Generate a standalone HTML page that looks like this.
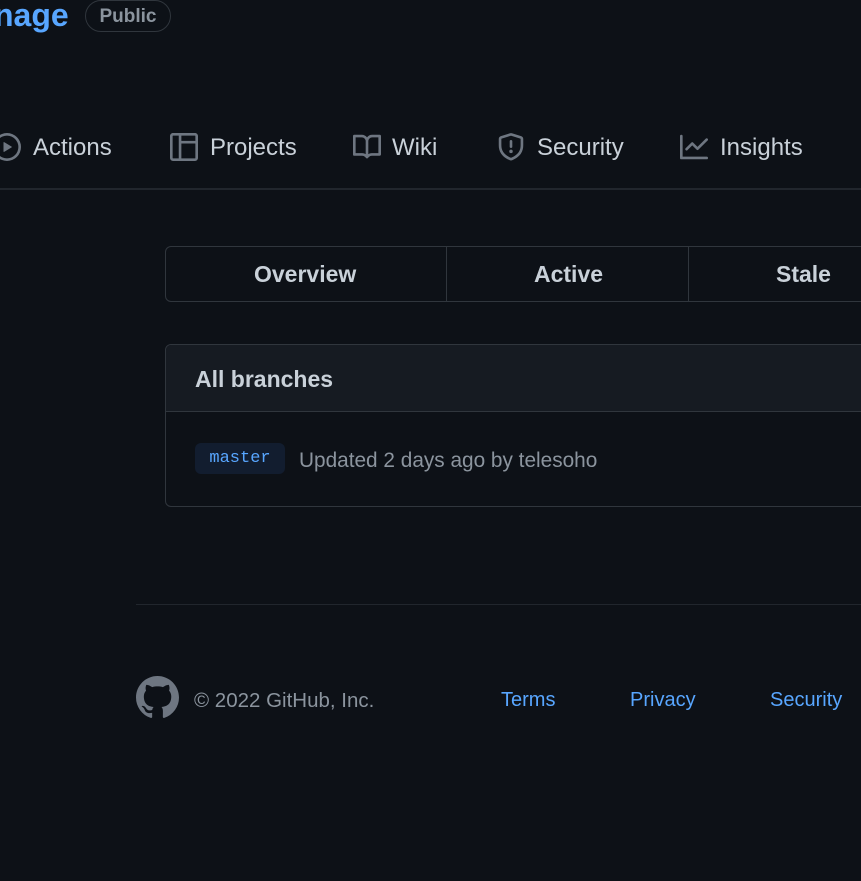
<!DOCTYPE html>
<html><head><meta charset="utf-8"><style>
*{margin:0;padding:0;box-sizing:border-box}
body{width:861px;height:881px;background:#0d1117;font-family:"Liberation Sans",sans-serif;color:#c9d1d9;position:relative;overflow:hidden}
.a{position:absolute;white-space:nowrap}
.nav{font-size:24px;color:#c9d1d9;top:134px}
.ic{position:absolute;top:133px}
</style></head><body>
<div class="a" style="left:-6px;top:-3px;font-size:32px;color:#58a6ff;font-weight:600">nage</div>
<div class="a" style="left:85px;top:0;width:86px;height:32px;border:1px solid #30363d;border-radius:16px;font-size:19px;color:#8b949e;font-weight:600;text-align:center;line-height:31px">Public</div>

<svg class="ic" style="left:-7px" width="28" height="28" viewBox="0 0 16 16" fill="#6e7681"><path d="M8 0a8 8 0 1 1 0 16A8 8 0 0 1 8 0ZM1.5 8a6.5 6.5 0 1 0 13 0 6.5 6.5 0 0 0-13 0Zm4.879-2.773 4.264 2.559a.25.25 0 0 1 0 .428l-4.264 2.559A.25.25 0 0 1 6 10.559V5.442a.25.25 0 0 1 .379-.215Z"/></svg>
<div class="a nav" style="left:33px">Actions</div>
<svg class="ic" style="left:170px" width="28" height="28" viewBox="0 0 16 16" fill="#6e7681"><path d="M1.75 0h12.5C15.216 0 16 .784 16 1.750v12.5A1.75 1.75 0 0 1 14.25 16H1.75A1.75 1.75 0 0 1 0 14.25V1.75C0 .784.784 0 1.75 0ZM1.5 1.75v12.5c0 .138.112.25.25.25H5V1.5H1.750a.25.25 0 0 0-.25.25ZM6.5 14.5h7.75a.25.25 0 0 0 .25-.25V6h-8Zm8-10V1.75a.25.25 0 0 0-.25-.25H6.5v3Z"/></svg>
<div class="a nav" style="left:210px">Projects</div>
<svg class="ic" style="left:353px" width="28" height="28" viewBox="0 0 16 16" fill="#6e7681"><path d="M0 1.75A.75.75 0 0 1 .75 1h4.253c1.227 0 2.317.59 3 1.501A3.743 3.743 0 0 1 11.006 1h4.245a.75.75 0 0 1 .75.75v10.5a.75.75 0 0 1-.75.75h-4.507a2.25 2.25 0 0 0-1.591.659l-.622.621a.75.75 0 0 1-1.060 0l-.622-.621A2.25 2.25 0 0 0 5.258 13H.75a.75.75 0 0 1-.75-.75Zm7.251 10.324.004-5.073-.002-2.253A2.25 2.25 0 0 0 5.003 2.5H1.5v9h3.757a3.75 3.75 0 0 1 1.994.574ZM8.755 4.75l-.004 7.322a3.752 3.752 0 0 1 1.992-.572H14.5v-9h-3.495a2.25 2.25 0 0 0-2.25 2.25Z"/></svg>
<div class="a nav" style="left:392px">Wiki</div>
<svg class="ic" style="left:497px" width="28" height="28" viewBox="0 0 16 16" fill="#6e7681"><path d="M7.467.133a1.748 1.748 0 0 1 1.066 0l5.25 1.68A1.75 1.75 0 0 1 15 3.48V7c0 1.566-.32 3.182-1.303 4.682-.983 1.498-2.585 2.813-5.032 3.855a1.697 1.697 0 0 1-1.330 0c-2.447-1.042-4.049-2.357-5.032-3.855C1.32 10.182 1 8.566 1 7V3.48a1.755 1.755 0 0 1 1.217-1.667Zm.61 1.429a.25.25 0 0 0-.153 0l-5.25 1.68a.25.25 0 0 0-.174.238V7c0 1.358.275 2.666 1.057 3.86.784 1.194 2.121 2.34 4.366 3.297a.196.196 0 0 0 .154 0c2.245-.956 3.582-2.104 4.366-3.298C13.225 9.666 13.5 8.36 13.5 7V3.48a.251.251 0 0 0-.174-.237l-5.25-1.68ZM8.75 4.75v3a.75.75 0 0 1-1.5 0v-3a.75.75 0 0 1 1.5 0ZM9 10.5a1 1 0 1 1-2 0 1 1 0 0 1 2 0Z"/></svg>
<div class="a nav" style="left:537px">Security</div>
<svg class="ic" style="left:680px" width="28" height="28" viewBox="0 0 16 16" fill="#6e7681"><path d="M1.5 1.75V13.5h13.75a.75.75 0 0 1 0 1.5H.75a.75.75 0 0 1-.75-.75V1.75a.75.75 0 0 1 1.5 0Zm14.28 2.53-5.25 5.25a.75.75 0 0 1-1.060 0L7 7.06 4.28 9.78a.751.751 0 0 1-1.042-.018.751.751 0 0 1-.018-1.042l3.25-3.25a.75.75 0 0 1 1.060 0L10 7.94l4.72-4.72a.751.751 0 0 1 1.042.018.751.751 0 0 1 .018 1.042Z"/></svg>
<div class="a nav" style="left:720px">Insights</div>
<div class="a" style="left:0;top:188px;width:861px;height:2px;background:#21262d"></div>

<div class="a" style="left:165px;top:246px;width:720px;height:56px;border:1px solid #30363d;border-radius:6px"></div>
<div class="a" style="left:446px;top:247px;width:1px;height:54px;background:#30363d"></div>
<div class="a" style="left:688px;top:247px;width:1px;height:54px;background:#30363d"></div>
<div class="a" style="left:254px;top:261px;font-size:23px;font-weight:600">Overview</div>
<div class="a" style="left:534px;top:261px;font-size:23px;font-weight:600">Active</div>
<div class="a" style="left:776px;top:261px;font-size:23px;font-weight:600">Stale</div>

<div class="a" style="left:165px;top:344px;width:720px;height:163px;border:1px solid #30363d;border-radius:6px;overflow:hidden">
 <div style="height:67px;background:#161b22;border-bottom:1px solid #30363d"></div>
</div>
<div class="a" style="left:195px;top:366px;font-size:23px;font-weight:600">All branches</div>
<div class="a" style="left:195px;top:443px;width:90px;height:31px;background:#121d2f;border-radius:6px;color:#58a6ff;font-family:'Liberation Mono',monospace;font-size:17px;line-height:32px;text-align:center;font-weight:500">master</div>
<div class="a" style="left:299px;top:449px;font-size:20.8px;color:#8b949e">Updated 2 days ago by telesoho</div>

<div class="a" style="left:136px;top:604px;width:725px;height:1px;background:#21262d"></div>
<svg class="a" style="left:136px;top:676px" width="43" height="43" viewBox="0 0 16 16" fill="#6e7681"><path d="M8 0c4.42 0 8 3.58 8 8a8.013 8.013 0 0 1-5.45 7.59c-.4.08-.55-.17-.55-.38 0-.27.01-1.13.01-2.2 0-.75-.25-1.23-.54-1.48 1.78-.2 3.65-.88 3.65-3.95 0-.88-.31-1.59-.82-2.15.08-.2.36-1.020-.08-2.12 0 0-.67-.22-2.2.82-.64-.18-1.32-.27-2-.27-.68 0-1.36.09-2 .27-1.53-1.03-2.2-.82-2.2-.82-.44 1.1-.16 1.92-.08 2.12-.51.56-.82 1.28-.82 2.15 0 3.06 1.86 3.75 3.64 3.95-.23.2-.44.55-.51 1.07-.46.21-1.61.55-2.33-.66-.15-.24-.6-.83-1.23-.82-.67.01-.27.38.01.53.34.19.73.9.82 1.13.16.45.68 1.31 2.69.94 0 .67.01 1.3.01 1.49 0 .21-.15.45-.55.38A7.995 7.995 0 0 1 0 8c0-4.42 3.58-8 8-8Z"/></svg>
<div class="a" style="left:194px;top:689px;font-size:20.5px;color:#8b949e">© 2022 GitHub, Inc.</div>
<div class="a" style="left:501px;top:689px;font-size:20px;color:#58a6ff">Terms</div>
<div class="a" style="left:630px;top:689px;font-size:20px;color:#58a6ff">Privacy</div>
<div class="a" style="left:770px;top:689px;font-size:20px;color:#58a6ff">Security</div>
</body></html>
